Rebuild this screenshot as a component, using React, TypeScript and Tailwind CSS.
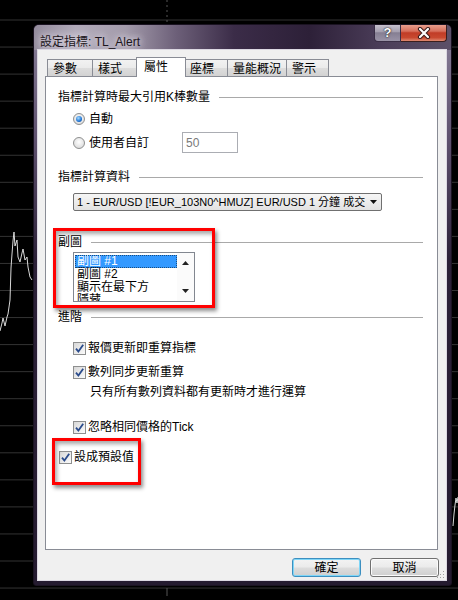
import React from "react";

const FONT = "font-['Liberation_Sans','Noto_Sans_CJK_TC',sans-serif]";

const gridYs = Array.from({ length: 22 }, (_, i) => 20 + i * 27.05);

const leftChart =
  "0,331 2,323 3,318 5,326 7,317 8,314 10,300 11,268 12,254 13,241 14,232 15,246 17,240 18,257 20,262 22,253 23,249 25,260 27,257 28,267 30,277 32,280";

const tabs = [
  { label: "參數", w: "w-[45px]" },
  { label: "樣式", w: "w-[46px]" },
  { label: "屬性", w: "w-[50px]", active: true },
  { label: "座標", w: "w-[43px]" },
  { label: "量能概況", w: "w-[59px]" },
  { label: "警示", w: "w-[43px]" },
];

const listItems = ["副圖 #1", "副圖 #2", "顯示在最下方", "隱藏"];

const SectionHeader = ({ title, className = "" }: { title: string; className?: string }) => (
  <div className={`flex items-center h-[14px] pl-[12px] pr-[14px] ${className}`}>
    <span className="text-[12px] leading-[14px] text-black whitespace-nowrap">{title}</span>
    <div className="flex-1 ml-[9px] h-px bg-[#a9a9a9]" />
  </div>
);

const Radio = ({ checked = false }: { checked?: boolean }) => (
  <span className="w-[12px] h-[12px] rounded-full border border-[#8e8f8f] bg-[radial-gradient(circle_at_50%_40%,#ffffff,#d3d3d3)] flex items-center justify-center shrink-0">
    {checked && (
      <span className="w-[6px] h-[6px] rounded-full bg-[radial-gradient(circle_at_40%_35%,#a6dcff,#1f74d4_60%,#0b3a7c)]" />
    )}
  </span>
);

const CheckBox = () => (
  <span className="w-[13px] h-[13px] shrink-0 border border-[#8e8f8f] bg-[linear-gradient(135deg,#d8d8d8,#fbfbfb)] flex items-center justify-center">
    <svg width="11" height="11" viewBox="0 0 11 11">
      <path d="M2 5.6 L4.4 8.6 L9.2 1.8" fill="none" stroke="#2b4c8c" strokeWidth="1.8" />
    </svg>
  </span>
);

const CheckRow = ({ label, className = "" }: { label: string; className?: string }) => (
  <div className={`flex items-center gap-[2px] h-[14px] ${className}`}>
    <CheckBox />
    <span className="text-[12px] leading-[14px] text-black whitespace-nowrap">{label}</span>
  </div>
);

const WinButton = ({ label, focused = false }: { label: string; focused?: boolean }) => (
  <div
    className={`w-[69px] h-[19px] rounded-[3px] border flex items-center justify-center text-[12px] leading-[14px] text-black bg-[linear-gradient(180deg,#f3f3f3_0%,#ebebeb_48%,#dddddd_52%,#cfcfcf_100%)] ${
      focused
        ? "border-[#3c8fc0] shadow-[inset_0_0_0_1px_#7fd6f7]"
        : "border-[#707070] shadow-[inset_0_0_0_1px_#fbfbfb]"
    }`}
  >
    {label}
  </div>
);

export default function App() {
  return (
    <div className={`relative w-[458px] h-[600px] bg-black overflow-hidden ${FONT}`}>
      {/* chart behind the window */}
      <svg className="absolute inset-0" width="458" height="600">
        {gridYs.map((y) => (
          <line key={y} x1="0" x2="458" y1={y} y2={y} stroke="#333333" strokeWidth="1" />
        ))}
        <line x1="167" x2="167" y1="0" y2="22" stroke="#555555" strokeDasharray="2 3" />
        <line x1="167" x2="167" y1="588" y2="596" stroke="#555555" />
        <polyline points={leftChart} fill="none" stroke="#d8d8d8" strokeWidth="1" />
        <polyline points="453,526 454,514 455,505 456,498 457,503 458,497" fill="none" stroke="#d8d8d8" />
      </svg>

      {/* dialog window */}
      <div className="absolute left-[33px] top-[24px] w-[419px] h-[562px] rounded-t-[6px] rounded-b-[3px] border border-[#1b1322] flex flex-col overflow-hidden bg-[linear-gradient(180deg,#8a819a_0%,#5f526f_20%,#2c2138_42%,#251b30_100%)]">
        {/* title bar */}
        <div className="relative h-[25px] shrink-0 pl-[6px] pt-[4px] bg-[linear-gradient(90deg,#938b9c_0%,#b2abba_10%,#a39bab_22%,#6d6079_34%,#3b2c48_48%,#2d2038_66%,#4c3e5a_84%,#5c5068_100%)]">
          <span className="text-[12px] leading-[14px] text-[#1c1620] [text-shadow:0_0_6px_#e6e0ec,0_0_10px_#e6e0ec]">
            設定指標: TL_Alert
          </span>
          <div className="absolute right-[4px] top-[-1px] flex">
            <div className="w-[27px] h-[18px] rounded-bl-[4px] border border-t-0 border-[#3a2e46] bg-[linear-gradient(180deg,#cbc6d2_0%,#a59faf_45%,#857e92_52%,#9a93a7_100%)] flex items-center justify-center">
              <span className="text-[13px] font-bold leading-[14px] text-white [text-shadow:0_0_1px_#222,0_0_2px_#222]">?</span>
            </div>
            <div className="w-[46px] h-[18px] rounded-br-[4px] border border-t-0 border-l-0 border-[#3a1e1e] bg-[linear-gradient(180deg,#eaa595_0%,#d7705c_42%,#c13c27_52%,#c8482f_80%,#e08a72_100%)] flex items-center justify-center">
              <svg width="14" height="12" viewBox="0 0 14 12">
                <path d="M3 2 L11 10 M11 2 L3 10" stroke="#3b1a1a" strokeWidth="4.2" strokeLinecap="round" />
                <path d="M3 2 L11 10 M11 2 L3 10" stroke="#ffffff" strokeWidth="2.2" strokeLinecap="round" />
              </svg>
            </div>
          </div>
        </div>

        {/* frame + client */}
        <div className="flex-1 flex pl-[4px] pr-[5px] pb-[5px]">
          <div className="relative flex-1 flex flex-col bg-[#f0f0f0] pt-[7px] pl-[7px] shadow-[0_0_0_1px_#dcd8e2]">
            {/* tab strip */}
            <div className="flex items-end h-[19px] pl-[2px]">
              {tabs.map((t) =>
                t.active ? (
                  <div
                    key={t.label}
                    className={`relative z-10 -mx-[2px] -mb-px h-[20px] ${t.w} border border-b-0 border-[#898c95] bg-white pl-[7px] pt-[2px] text-[12px] leading-[14px] text-black`}
                  >
                    {t.label}
                  </div>
                ) : (
                  <div
                    key={t.label}
                    className={`h-[17px] ${t.w} border border-b-0 border-r-0 last:border-r border-[#898c95] bg-[linear-gradient(180deg,#f2f2f2_0%,#ebebeb_48%,#dddddd_52%,#d2d2d2_100%)] pl-[5px] pt-[2px] text-[12px] leading-[14px] text-black whitespace-nowrap`}
                  >
                    {t.label}
                  </div>
                )
              )}
            </div>

            {/* tab panel */}
            <div className="relative w-[393px] h-[474px] border border-[#898c95] bg-white flex flex-col">
              <SectionHeader className="mt-[13px]" title="指標計算時最大引用K棒數量" />

              <div className="mt-[8px] ml-[27px] flex items-center h-[14px] gap-[4px]">
                <Radio checked />
                <span className="text-[12px] leading-[14px] text-black">自動</span>
              </div>

              <div className="mt-[6px] ml-[27px] flex items-center h-[21px]">
                <div className="w-[109px] flex items-center gap-[4px]">
                  <Radio />
                  <span className="text-[12px] leading-[14px] text-black">使用者自訂</span>
                </div>
                <div className="w-[56px] h-[21px] border border-[#abadb3] bg-white pl-[3px] flex items-center text-[12px] leading-[14px] text-[#7a7a7a]">
                  50
                </div>
              </div>

              <SectionHeader className="mt-[17px]" title="指標計算資料" />

              <div className="mt-[9px] ml-[27px] w-[309px] h-[18px] rounded-[2px] border border-[#707070] bg-[linear-gradient(180deg,#f6f6f6_0%,#ececec_50%,#e2e2e2_100%)] flex items-center">
                <span className="flex-1 overflow-hidden whitespace-nowrap pl-[3px] text-[11px] leading-[13px] text-black">
                  1 - EUR/USD [!EUR_103N0^HMUZ] EUR/USD 1 分鐘 成交價
                </span>
                <span className="w-[16px] flex items-center justify-center">
                  <svg width="7" height="4" viewBox="0 0 7 4">
                    <path d="M0 0 L7 0 L3.5 4 Z" fill="#111111" />
                  </svg>
                </span>
              </div>

              <SectionHeader className="mt-[24px]" title="副圖" />

              <div className="mt-[3px] ml-[27px] w-[122px] h-[50px] border border-[#828790] bg-white flex overflow-hidden">
                <div className="flex-1 pt-[2px] pl-[1px]">
                  {listItems.map((item, i) => (
                    <div
                      key={item}
                      className={`h-[13px] pl-[2px] text-[12px] leading-[13px] whitespace-nowrap ${
                        i === 0 ? "bg-[#3399ff] text-white outline-1 outline-dotted outline-[#1a4d80] -outline-offset-1" : "text-black"
                      }`}
                    >
                      {item}
                    </div>
                  ))}
                </div>
                <div className="w-[17px] bg-[#fbfbfb] flex flex-col items-center justify-between py-[8px]">
                  <svg width="7" height="4" viewBox="0 0 7 4">
                    <path d="M0 4 L7 4 L3.5 0 Z" fill="#222222" />
                  </svg>
                  <svg width="7" height="4" viewBox="0 0 7 4">
                    <path d="M0 0 L7 0 L3.5 4 Z" fill="#222222" />
                  </svg>
                </div>
              </div>

              <SectionHeader className="mt-[8px]" title="進階" />

              <CheckRow className="mt-[17px] ml-[27px]" label="報價更新即重算指標" />
              <CheckRow className="mt-[10px] ml-[27px]" label="數列同步更新重算" />
              <div className="mt-[6px] ml-[44px] h-[14px] text-[12px] leading-[14px] text-black whitespace-nowrap">
                只有所有數列資料都有更新時才進行運算
              </div>
              <CheckRow className="mt-[21px] ml-[27px]" label="忽略相同價格的Tick" />
              <CheckRow className="mt-[16px] ml-[13px]" label="設成預設值" />

              {/* red annotation boxes */}
              <div className="absolute left-[7px] top-[151px] w-[162px] h-[80px] border-[3px] border-[#ff0000] shadow-[2px_3px_4px_rgba(0,0,0,0.45),inset_2px_3px_4px_rgba(0,0,0,0.35)]" />
              <div className="absolute left-[6px] top-[361px] w-[89px] h-[47px] border-[3px] border-[#ff0000] shadow-[2px_3px_4px_rgba(0,0,0,0.45),inset_2px_3px_4px_rgba(0,0,0,0.35)]" />
            </div>

            {/* buttons */}
            <div className="mt-[8px] flex justify-end gap-[9px] pr-[7px]">
              <WinButton label="確定" focused />
              <WinButton label="取消" />
            </div>

            {/* size grip */}
            <svg className="absolute right-[1px] bottom-[1px]" width="8" height="8" viewBox="0 0 8 8">
              <rect x="6" y="0" width="1" height="1" fill="#a0a0a0" />
              <rect x="3" y="3" width="1" height="1" fill="#a0a0a0" />
              <rect x="6" y="3" width="1" height="1" fill="#a0a0a0" />
              <rect x="0" y="6" width="1" height="1" fill="#a0a0a0" />
              <rect x="3" y="6" width="1" height="1" fill="#a0a0a0" />
              <rect x="6" y="6" width="1" height="1" fill="#a0a0a0" />
            </svg>
          </div>
        </div>
      </div>
    </div>
  );
}
